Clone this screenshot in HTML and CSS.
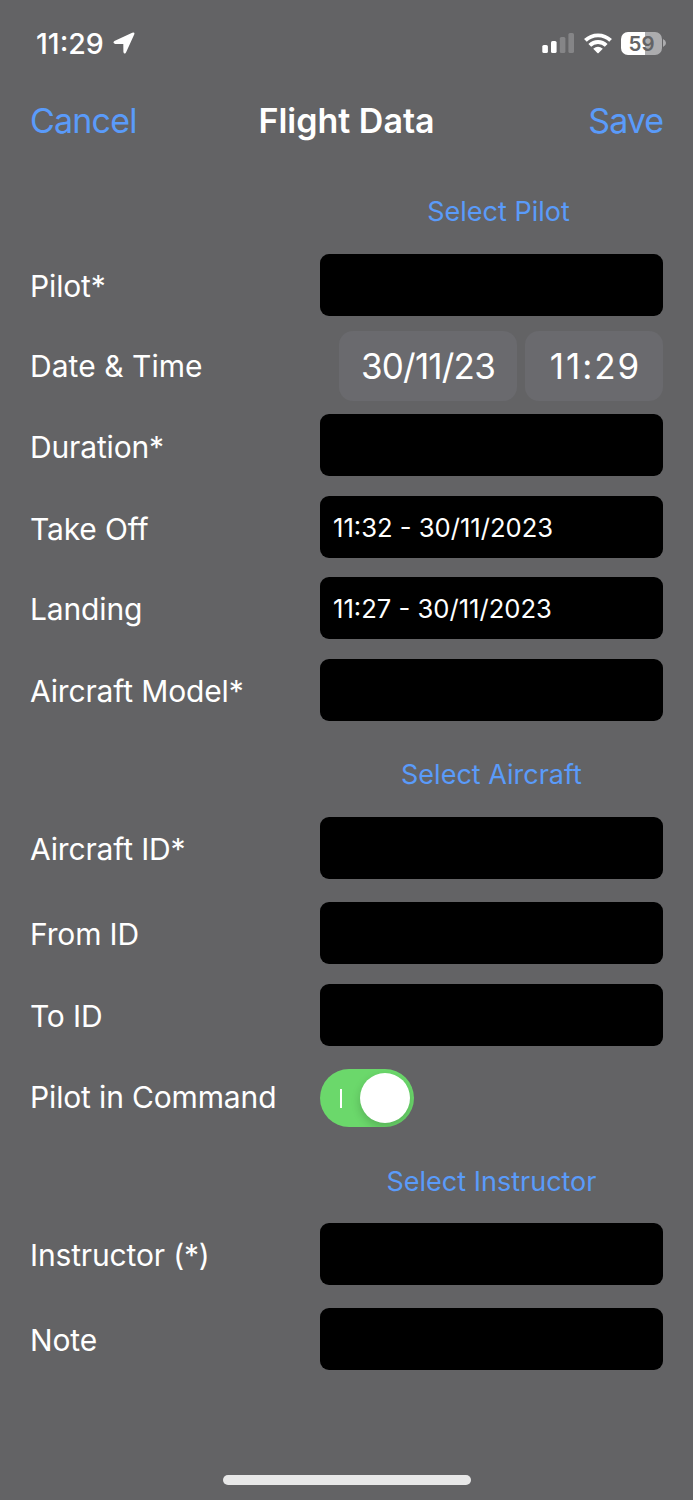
FILE: index.html
```html
<!DOCTYPE html>
<html lang="en">
<head>
    <meta charset="UTF-8">
    <meta name="viewport" content="width=device-width, initial-scale=1.0">
    <title>Flight Data</title>
    <link rel="stylesheet" href="styles.css">
</head>
<body>
    <div class="status-bar">
        <div class="status-left">
            <span class="clock">11:29</span>
            <svg class="location" width="22" height="22" viewBox="0 0 22 22">
                <path d="M1.4 8.9 L19.2 0.7 Q22.2 -0.3 21.2 2.6 L13 20.4 Q11.2 23 10.4 20 L10.3 12 L2.2 11.9 Q-0.8 10.9 1.4 8.9 Z" fill="#fff"/>
            </svg>
        </div>
        <div class="status-right">
            <svg class="signal" width="32" height="20" viewBox="0 0 32 20">
                <rect x="0.3" y="12" width="5.6" height="8" rx="1.6" fill="#fff"/>
                <rect x="9" y="8" width="5.6" height="12" rx="1.6" fill="#fff"/>
                <rect x="17.8" y="4" width="5.6" height="16" rx="1.6" fill="#858587"/>
                <rect x="26.4" y="0" width="5.6" height="20" rx="1.6" fill="#858587"/>
            </svg>
            <svg class="wifi" width="28" height="21" viewBox="0 0 28 21">
                <g fill="none" stroke="#fff" stroke-width="3.9">
                    <path d="M1.4 7.4 A18.2 18.2 0 0 1 26.6 7.4"/>
                    <path d="M5.8 12.4 A11.6 11.6 0 0 1 22.2 12.4"/>
                </g>
                <path d="M9.2 15.8 Q14 11.8 18.8 15.8 L14.6 20 Q14 20.5 13.4 20 Z" fill="#fff"/>
            </svg>
            <div class="battery"><span>59</span></div>
            <svg class="battery-tip" width="3" height="8" viewBox="0 0 3 8">
                <path d="M0 0 Q3 1.3 3 4 Q3 6.7 0 8 Z" fill="#acacae"/>
            </svg>
        </div>
    </div>

    <div class="nav-bar">
        <a class="nav-link cancel">Cancel</a>
        <h1>Flight Data</h1>
        <a class="nav-link save">Save</a>
    </div>

    <form class="form">
        <a class="select-link select-pilot">Select Pilot</a>

        <label>Pilot*</label>
        <div class="field"></div>

        <label class="date-label">Date &amp; Time</label>
        <div class="pickers">
            <span class="picker date">30/11/23</span>
            <span class="picker time">11:29</span>
        </div>

        <label class="duration">Duration*</label>
        <div class="field"></div>

        <label class="take-off">Take Off</label>
        <div class="field">11:32 - 30/11/2023</div>

        <label>Landing</label>
        <div class="field">11:27 - 30/11/2023</div>

        <label>Aircraft Model*</label>
        <div class="field"></div>

        <a class="select-link">Select Aircraft</a>

        <label>Aircraft ID*</label>
        <div class="field"></div>

        <label>From ID</label>
        <div class="field"></div>

        <label>To ID</label>
        <div class="field"></div>

        <label class="command">Pilot in Command</label>
        <div class="switch">
            <span class="switch-mark"></span>
            <span class="switch-knob"></span>
        </div>

        <a class="select-link">Select Instructor</a>

        <label>Instructor (*)</label>
        <div class="field"></div>

        <label>Note</label>
        <div class="field"></div>
    </form>

    <div class="home-indicator"></div>
</body>
</html>
```

FILE: styles.css
```css
* {
    box-sizing: border-box;
}
body {
    margin: 0;
    height: 1500px;
    display: flex;
    flex-direction: column;
    background-color: #636365;
    color: #fff;
    font-family: Inter, "Liberation Sans", sans-serif;
    overflow: hidden;
}
.status-bar {
    display: flex;
    justify-content: space-between;
    align-items: center;
    height: 86px;
    padding: 0 27px 0 36px;
}
.status-left, .status-right {
    display: flex;
    align-items: center;
}
.clock {
    width: 69px;
    font-size: 28.5px;
    font-weight: 500;
    white-space: nowrap;
}
.location {
    margin-left: 8px;
}
.wifi {
    margin: 0 9px 0 10px;
}
.battery {
    width: 41px;
    height: 23px;
    border-radius: 7px;
    background: linear-gradient(to right, #fff 59%, #acacae 59%);
    color: #636365;
    font-size: 20.5px;
    font-weight: 600;
    line-height: 23px;
    text-align: center;
}
.battery-tip {
    margin-left: 1px;
}
.nav-bar {
    display: grid;
    grid-template-columns: 1fr auto 1fr;
    align-items: center;
    height: 70px;
    padding: 0 30px;
}
.nav-link {
    color: #5a9bfa;
    font-size: 34px;
    letter-spacing: -0.8px;
    line-height: 42px;
    padding-bottom: 1px;
}
.save {
    text-align: right;
    letter-spacing: -1px;
}
h1 {
    margin: 0;
    font-size: 34px;
    font-weight: 600;
    line-height: 42px;
    padding-bottom: 1px;
}
.form {
    display: grid;
    grid-template-columns: 290px 343px;
    grid-template-rows: 74px 81px 79px 82px 81px 82px 84px 74px 85px 82px 83px 83px 73px 85px 62px;
    align-items: start;
    padding: 24px 30px 0;
}
label {
    height: 62px;
    padding-top: 1px;
    font-size: 30px;
    letter-spacing: -0.15px;
    line-height: 62px;
    white-space: nowrap;
}
.date-label {
    padding-top: 0;
    letter-spacing: 0.05px;
}
.duration, .take-off {
    padding-top: 2px;
}
.command {
    padding-top: 0;
    line-height: 60px;
}
.select-link {
    grid-column: 2;
    padding-top: 1px;
    color: #5a9bfa;
    font-size: 27px;
    line-height: 62px;
    text-align: center;
}
.select-pilot {
    padding-left: 14px;
}
.field {
    height: 62px;
    padding-left: 13px;
    border-radius: 9px;
    background-color: #000;
    font-size: 25.6px;
    line-height: 63px;
}
.pickers {
    display: flex;
    align-items: center;
    justify-content: flex-end;
    gap: 8px;
    height: 62px;
}
.picker {
    flex: none;
    height: 70px;
    border-radius: 14px;
    background-color: #6a6a6e;
    font-size: 35px;
    line-height: 70px;
    text-align: center;
}
.date {
    width: 178px;
    letter-spacing: -0.8px;
}
.time {
    width: 138px;
    padding-left: 3px;
    letter-spacing: 2px;
}
.switch {
    display: flex;
    align-items: center;
    justify-content: space-between;
    width: 94px;
    height: 58px;
    margin-top: 2px;
    padding: 0 4px 0 20px;
    border-radius: 29px;
    background-color: #6bd86b;
    overflow: hidden;
}
.switch-mark {
    width: 2px;
    height: 19px;
    background-color: #fff;
}
.switch-knob {
    width: 50px;
    height: 50px;
    border-radius: 50%;
    background-color: #fff;
    box-shadow: 0 4px 10px rgba(0, 0, 0, 0.18);
}
.home-indicator {
    width: 248px;
    height: 10px;
    margin: auto auto 15px;
    border-radius: 5px;
    background-color: #e8e8e8;
}
```
